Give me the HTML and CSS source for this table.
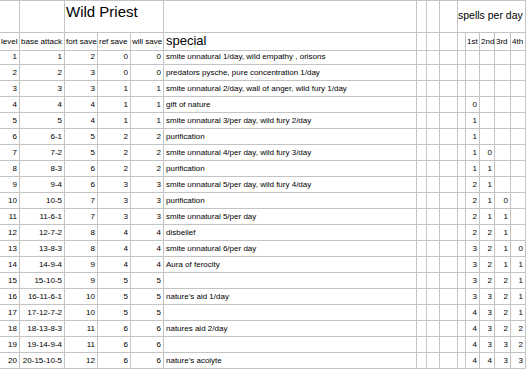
FILE: index.html
```html
<!DOCTYPE html>
<html>
<head>
<meta charset="utf-8">
<link rel="stylesheet" href="styles.css">
</head>
<body>
<div class="sheet">
  <div class="row head1">
    <div class="c"></div>
    <div class="c"></div>
    <div class="c title">Wild Priest</div>
    <div class="c"></div>
    <div class="c"></div>
    <div class="c"></div>
    <div class="c"></div>
    <div class="c spells">spells per day</div>
  </div>
  <div class="row head2">
    <div class="c t">level</div>
    <div class="c t">base attack</div>
    <div class="c t">fort save</div>
    <div class="c t">ref save</div>
    <div class="c t">will save</div>
    <div class="c t special">special</div>
    <div class="c"></div>
    <div class="c"></div>
    <div class="c"></div>
    <div class="c"></div>
    <div class="c t lv">1st</div>
    <div class="c t lv">2nd</div>
    <div class="c t lv">3rd</div>
    <div class="c t lv">4th</div>
  </div>
  <div class="row"><div class="c n">1</div><div class="c n">1</div><div class="c n">2</div><div class="c n">0</div><div class="c n">0</div><div class="c t">smite unnatural 1/day, wild empathy , orisons</div><div class="c"></div><div class="c"></div><div class="c"></div><div class="c"></div><div class="c n"></div><div class="c n"></div><div class="c n"></div><div class="c n"></div></div>
  <div class="row"><div class="c n">2</div><div class="c n">2</div><div class="c n">3</div><div class="c n">0</div><div class="c n">0</div><div class="c t">predators pysche, pure concentration 1/day</div><div class="c"></div><div class="c"></div><div class="c"></div><div class="c"></div><div class="c n"></div><div class="c n"></div><div class="c n"></div><div class="c n"></div></div>
  <div class="row"><div class="c n">3</div><div class="c n">3</div><div class="c n">3</div><div class="c n">1</div><div class="c n">1</div><div class="c t">smite unnatural 2/day, wall of anger, wild fury 1/day</div><div class="c"></div><div class="c"></div><div class="c"></div><div class="c"></div><div class="c n"></div><div class="c n"></div><div class="c n"></div><div class="c n"></div></div>
  <div class="row"><div class="c n">4</div><div class="c n">4</div><div class="c n">4</div><div class="c n">1</div><div class="c n">1</div><div class="c t">gift of nature</div><div class="c"></div><div class="c"></div><div class="c"></div><div class="c"></div><div class="c n">0</div><div class="c n"></div><div class="c n"></div><div class="c n"></div></div>
  <div class="row"><div class="c n">5</div><div class="c n">5</div><div class="c n">4</div><div class="c n">1</div><div class="c n">1</div><div class="c t">smite unnatural 3/per day, wild fury 2/day</div><div class="c"></div><div class="c"></div><div class="c"></div><div class="c"></div><div class="c n">1</div><div class="c n"></div><div class="c n"></div><div class="c n"></div></div>
  <div class="row"><div class="c n">6</div><div class="c n">6-1</div><div class="c n">5</div><div class="c n">2</div><div class="c n">2</div><div class="c t">purification</div><div class="c"></div><div class="c"></div><div class="c"></div><div class="c"></div><div class="c n">1</div><div class="c n"></div><div class="c n"></div><div class="c n"></div></div>
  <div class="row"><div class="c n">7</div><div class="c n">7-2</div><div class="c n">5</div><div class="c n">2</div><div class="c n">2</div><div class="c t">smite unnatural 4/per day, wild fury 3/day</div><div class="c"></div><div class="c"></div><div class="c"></div><div class="c"></div><div class="c n">1</div><div class="c n">0</div><div class="c n"></div><div class="c n"></div></div>
  <div class="row"><div class="c n">8</div><div class="c n">8-3</div><div class="c n">6</div><div class="c n">2</div><div class="c n">2</div><div class="c t">purification</div><div class="c"></div><div class="c"></div><div class="c"></div><div class="c"></div><div class="c n">1</div><div class="c n">1</div><div class="c n"></div><div class="c n"></div></div>
  <div class="row"><div class="c n">9</div><div class="c n">9-4</div><div class="c n">6</div><div class="c n">3</div><div class="c n">3</div><div class="c t">smite unnatural 5/per day, wild fury 4/day</div><div class="c"></div><div class="c"></div><div class="c"></div><div class="c"></div><div class="c n">2</div><div class="c n">1</div><div class="c n"></div><div class="c n"></div></div>
  <div class="row"><div class="c n">10</div><div class="c n">10-5</div><div class="c n">7</div><div class="c n">3</div><div class="c n">3</div><div class="c t">purification</div><div class="c"></div><div class="c"></div><div class="c"></div><div class="c"></div><div class="c n">2</div><div class="c n">1</div><div class="c n">0</div><div class="c n"></div></div>
  <div class="row"><div class="c n">11</div><div class="c n">11-6-1</div><div class="c n">7</div><div class="c n">3</div><div class="c n">3</div><div class="c t">smite unnatural 5/per day</div><div class="c"></div><div class="c"></div><div class="c"></div><div class="c"></div><div class="c n">2</div><div class="c n">1</div><div class="c n">1</div><div class="c n"></div></div>
  <div class="row"><div class="c n">12</div><div class="c n">12-7-2</div><div class="c n">8</div><div class="c n">4</div><div class="c n">4</div><div class="c t">disbelief</div><div class="c"></div><div class="c"></div><div class="c"></div><div class="c"></div><div class="c n">2</div><div class="c n">2</div><div class="c n">1</div><div class="c n"></div></div>
  <div class="row"><div class="c n">13</div><div class="c n">13-8-3</div><div class="c n">8</div><div class="c n">4</div><div class="c n">4</div><div class="c t">smite unnatural 6/per day</div><div class="c"></div><div class="c"></div><div class="c"></div><div class="c"></div><div class="c n">3</div><div class="c n">2</div><div class="c n">1</div><div class="c n">0</div></div>
  <div class="row"><div class="c n">14</div><div class="c n">14-9-4</div><div class="c n">9</div><div class="c n">4</div><div class="c n">4</div><div class="c t">Aura of ferocity</div><div class="c"></div><div class="c"></div><div class="c"></div><div class="c"></div><div class="c n">3</div><div class="c n">2</div><div class="c n">1</div><div class="c n">1</div></div>
  <div class="row"><div class="c n">15</div><div class="c n">15-10-5</div><div class="c n">9</div><div class="c n">5</div><div class="c n">5</div><div class="c t"></div><div class="c"></div><div class="c"></div><div class="c"></div><div class="c"></div><div class="c n">3</div><div class="c n">2</div><div class="c n">2</div><div class="c n">1</div></div>
  <div class="row"><div class="c n">16</div><div class="c n">16-11-6-1</div><div class="c n">10</div><div class="c n">5</div><div class="c n">5</div><div class="c t">nature's aid 1/day</div><div class="c"></div><div class="c"></div><div class="c"></div><div class="c"></div><div class="c n">3</div><div class="c n">3</div><div class="c n">2</div><div class="c n">1</div></div>
  <div class="row"><div class="c n">17</div><div class="c n">17-12-7-2</div><div class="c n">10</div><div class="c n">5</div><div class="c n">5</div><div class="c t"></div><div class="c"></div><div class="c"></div><div class="c"></div><div class="c"></div><div class="c n">4</div><div class="c n">3</div><div class="c n">2</div><div class="c n">1</div></div>
  <div class="row"><div class="c n">18</div><div class="c n">18-13-8-3</div><div class="c n">11</div><div class="c n">6</div><div class="c n">6</div><div class="c t">natures aid 2/day</div><div class="c"></div><div class="c"></div><div class="c"></div><div class="c"></div><div class="c n">4</div><div class="c n">3</div><div class="c n">2</div><div class="c n">2</div></div>
  <div class="row"><div class="c n">19</div><div class="c n">19-14-9-4</div><div class="c n">11</div><div class="c n">6</div><div class="c n">6</div><div class="c t"></div><div class="c"></div><div class="c"></div><div class="c"></div><div class="c"></div><div class="c n">4</div><div class="c n">3</div><div class="c n">3</div><div class="c n">2</div></div>
  <div class="row"><div class="c n">20</div><div class="c n">20-15-10-5</div><div class="c n">12</div><div class="c n">6</div><div class="c n">6</div><div class="c t">nature's acolyte</div><div class="c"></div><div class="c"></div><div class="c"></div><div class="c"></div><div class="c n">4</div><div class="c n">4</div><div class="c n">3</div><div class="c n">3</div></div>
</div>
</body>
</html>
```
FILE: styles.css
```css
html, body {
  margin: 0;
  padding: 0;
  background: #ffffff;
}
body {
  font-family: "Liberation Sans", Arial, sans-serif;
  color: #000000;
  width: 526px;
  height: 369px;
  overflow: hidden;
}
.sheet {
  border-top: 1px solid #c4c4c4;
  width: 526px;
}
.row {
  display: grid;
  grid-template-columns: 20px 45px 33px 33px 33px 253px 10px 13px 18px 8px 14px 15px 16px 15px;
  height: 16px;
}
.row.head1 {
  grid-template-columns: 20px 45px 99px 253px 10px 13px 18px 68px;
  height: 32px;
}
.c {
  box-sizing: border-box;
  border-right: 1px solid #c4c4c4;
  border-bottom: 1px solid #c4c4c4;
  font-size: 8px;
  line-height: 15px;
  white-space: nowrap;
  overflow: visible;
  min-width: 0;
}
.n {
  text-align: right;
  padding-right: 2px;
}
.t {
  text-align: left;
  padding-left: 1px;
}
.row:not(.head2) .t {
  padding-left: 2px;
}
.head2 .c {
  line-height: 17px;
}
.title {
  font-size: 15px;
  line-height: 15px;
  padding-top: 3px;
  padding-left: 1px;
}
.spells {
  font-size: 10.5px;
  line-height: 12px;
  padding-top: 8px;
  padding-left: 0;
}
.head2 .special {
  font-size: 13px;
  line-height: 15px;
  padding-left: 2px;
}
.lv {
  padding-left: 1px;
}
```
